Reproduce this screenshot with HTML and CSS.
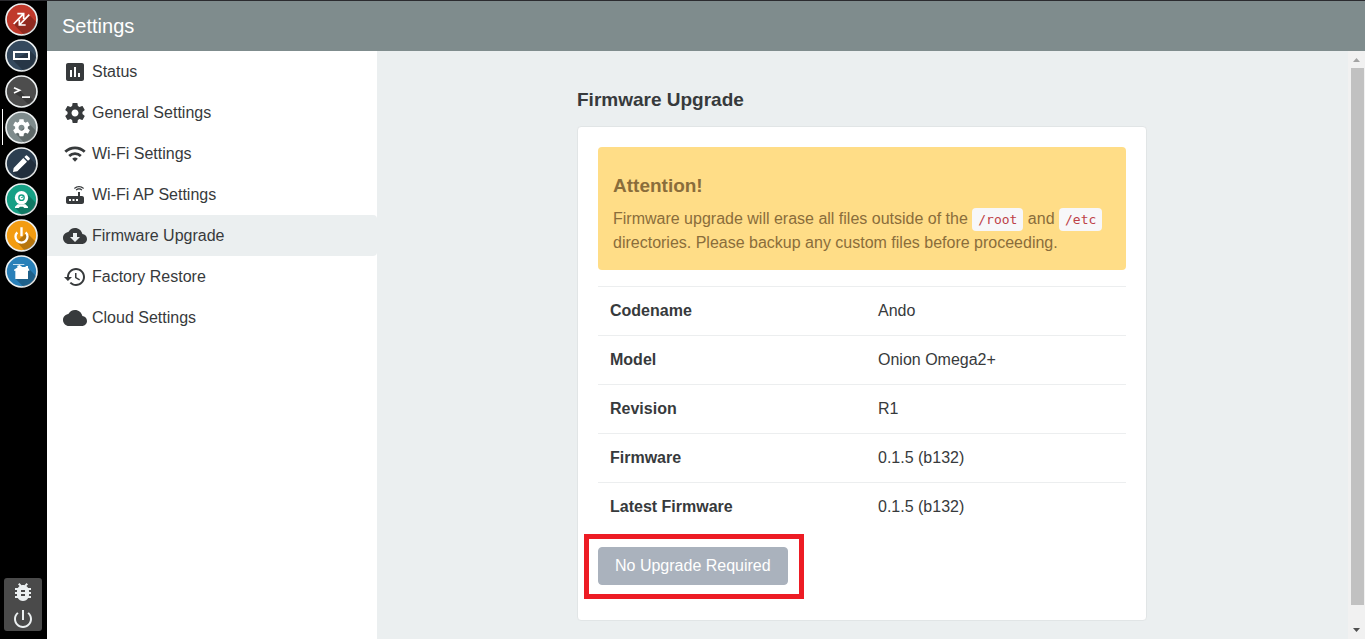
FILE: index.html
```html
<!DOCTYPE html>
<html lang="en">
<head>
<meta charset="utf-8">
<title>Settings</title>
<link rel="stylesheet" href="styles.css">
</head>
<body>
<div class="desktop">
  <nav class="dock" aria-label="Applications">
    <svg class="defs" width="0" height="0" aria-hidden="true">
      <clipPath id="disc"><circle cx="49.5" cy="49.5" r="46"/></clipPath>
    </svg>
    <div class="dock-apps">
      <button class="app" aria-label="Cloud link">
        <svg viewBox="0 0 99 99"><circle class="rim" cx="49.5" cy="49.5" r="46.5" fill="#c0392b"/><path class="shade" clip-path="url(#disc)" d="M72 35L130 93V130H90L26 64L46 50L54 60z"/><path class="line" stroke-width="5" d="M26 63L56 32M37 32H56V48M73 35L43 66M43 50V66H62"/></svg>
      </button>
      <button class="app" aria-label="Expansion display">
        <svg viewBox="0 0 99 99"><circle class="rim" cx="49.5" cy="49.5" r="46.5" fill="#34495e"/><path class="shade" clip-path="url(#disc)" d="M76 36L130 90V130H90L24 64z"/><path class="line" stroke-width="6" d="M27 39H72V60H27z"/></svg>
      </button>
      <button class="app" aria-label="Terminal">
        <svg viewBox="0 0 99 99"><circle class="rim" cx="49.5" cy="49.5" r="46.5" fill="#4d4d4d"/><path class="shade" clip-path="url(#disc)" d="M44 46L62 65H75L110 100H82L51 69L27 54z"/><path class="line" stroke-width="5" d="M27 38L44 46L27 54M51 66.500H75"/></svg>
      </button>
      <button class="app app-active" aria-label="Settings">
        <svg viewBox="0 0 99 99"><circle class="rim" cx="49.5" cy="49.5" r="46.5" fill="#7f8c8d"/><path class="shade" clip-path="url(#disc)" d="M72 38L120 86V130H90L34 70z"/><path fill="#fff" transform="translate(18.900 19.500) scale(2.550)" d="M19.430 12.980c.04-.32.07-.64.07-.98s-.03-.66-.07-.98l2.110-1.650c.19-.15.24-.42.12-.64l-2-3.460c-.12-.22-.39-.3-.61-.22l-2.490 1c-.52-.4-1.080-.73-1.690-.98l-.38-2.650C14.460 2.180 14.250 2 14 2h-4c-.25 0-.46.18-.49.42l-.38 2.650c-.61.25-1.170.59-1.690.98l-2.490-1c-.23-.09-.49 0-.61.22l-2 3.460c-.13.22-.07.49.12.64l2.110 1.650c-.04.32-.07.65-.07.98s.03.66.07.98l-2.110 1.650c-.19.15-.24.42-.12.64l2 3.460c.12.22.39.3.61.22l2.490-1c.52.4 1.080.73 1.690.98l.38 2.650c.03.24.24.42.49.42h4c.25 0 .46-.18.49-.42l.38-2.650c.61-.25 1.170-.59 1.690-.98l2.490 1c.23.09.49 0 .61-.22l2-3.460c.12-.22.07-.49-.12-.64l-2.110-1.650zM12 15.500c-1.930 0-3.500-1.570-3.500-3.500s1.570-3.500 3.500-3.500 3.500 1.570 3.500 3.500-1.570 3.500-3.500 3.500z"/></svg>
      </button>
      <button class="app" aria-label="Editor">
        <svg viewBox="0 0 99 99"><circle class="rim" cx="49.5" cy="49.5" r="46.5" fill="#2c3e50"/><path class="shade" clip-path="url(#disc)" d="M75 34L125 84V130H82L24 74z"/><path fill="#fff" d="M24 75L26 63L55 33L66 44L37 73zM58 30L62 26Q64 24 67 26L74 33Q76 36 73 38L69 41z"/></svg>
      </button>
      <button class="app" aria-label="Webcam">
        <svg viewBox="0 0 99 99"><circle class="rim" cx="49.5" cy="49.5" r="46.5" fill="#16a085"/><path class="shade" clip-path="url(#disc)" d="M64 31L120 87V130H80L31 74z"/><circle cx="49.5" cy="44" r="20" fill="#fff"/><circle cx="49.5" cy="44" r="10" fill="#16a085"/><circle cx="49.5" cy="44" r="6" fill="#fff"/><path d="M47 45L53 39V45z" fill="#16a085"/><path fill="#fff" d="M38 64H61L69 71V75H58L54 71H45L41 75H30V71z"/></svg>
      </button>
      <button class="app" aria-label="Power control">
        <svg viewBox="0 0 99 99"><circle class="rim" cx="49.5" cy="49.5" r="46.5" fill="#f39c12"/><path class="shade" clip-path="url(#disc)" d="M65 41L120 96V130H90L35 68z"/><path class="line" stroke-width="7" d="M37 40A18 18 0 1 0 62 40M49.500 25V52"/></svg>
      </button>
      <button class="app" aria-label="App manager">
        <svg viewBox="0 0 99 99"><circle class="rim" cx="49.5" cy="49.5" r="46.5" fill="#2980b9"/><path class="shade" clip-path="url(#disc)" d="M70 40L125 95V130H90L32 72z"/><path fill="#fff" d="M24 27H58V29.500H24zM36 33L44 30L52 36H62V33H69V38L73 44V47H69V72H31V47H27V44L38 37z"/></svg>
      </button>
    </div>
    <div class="dock-tools">
      <button class="tool" aria-label="Report a bug"><svg viewBox="0 0 24 24"><path d="M20 8h-2.810c-.45-.78-1.070-1.450-1.820-1.960L17 4.410 15.590 3l-2.170 2.170C12.960 5.060 12.490 5 12 5s-.96.06-1.410.17L8.410 3 7 4.410l1.620 1.630C7.880 6.550 7.260 7.220 6.810 8H4v2h2.090c-.05.33-.09.66-.09 1v1H4v2h2v1c0 .34.04.67.09 1H4v2h2.810c1.040 1.790 2.970 3 5.190 3s4.150-1.210 5.190-3H20v-2h-2.090c.05-.33.09-.66.09-1v-1h2v-2h-2v-1c0-.34-.04-.67-.09-1H20V8zm-6 8h-4v-2h4v2zm0-4h-4v-2h4v2z"/></svg></button>
      <button class="tool" aria-label="Log out"><svg viewBox="0 0 24 24"><path d="M13 3h-2v10h2V3zm4.830 2.170l-1.420 1.420C17.990 7.860 19 9.810 19 12c0 3.870-3.130 7-7 7s-7-3.130-7-7c0-2.190 1.010-4.140 2.580-5.420L6.170 5.170C4.230 6.820 3 9.260 3 12c0 4.970 4.030 9 9 9s9-4.030 9-9c0-2.740-1.230-5.180-3.170-6.830z"/></svg></button>
    </div>
  </nav>

  <div class="window">
    <header class="titlebar"><h1 class="title">Settings</h1></header>
    <div class="body">
      <nav class="menu" aria-label="Settings sections">
        <a class="item" href="#status"><svg class="icon" viewBox="0 0 24 24"><path d="M19 3H5c-1.100 0-2 .9-2 2v14c0 1.100.9 2 2 2h14c1.100 0 2-.9 2-2V5c0-1.100-.9-2-2-2zM9 17H7v-7h2v7zm4 0h-2V7h2v10zm4 0h-2v-4h2v4z"/></svg>Status</a>
        <a class="item" href="#general"><svg class="icon" viewBox="0 0 24 24"><path d="M19.430 12.980c.04-.32.07-.64.07-.98s-.03-.66-.07-.98l2.110-1.650c.19-.15.24-.42.12-.64l-2-3.460c-.12-.22-.39-.3-.61-.22l-2.490 1c-.52-.4-1.080-.73-1.690-.98l-.38-2.650C14.460 2.180 14.250 2 14 2h-4c-.25 0-.46.18-.49.42l-.38 2.650c-.61.25-1.170.59-1.690.98l-2.490-1c-.23-.09-.49 0-.61.22l-2 3.460c-.13.22-.07.49.12.64l2.110 1.650c-.04.32-.07.65-.07.98s.03.66.07.98l-2.110 1.650c-.19.15-.24.42-.12.64l2 3.460c.12.22.39.3.61.22l2.490-1c.52.4 1.080.73 1.690.98l.38 2.650c.03.24.24.42.49.42h4c.25 0 .46-.18.49-.42l.38-2.650c.61-.25 1.170-.59 1.690-.98l2.490 1c.23.09.49 0 .61-.22l2-3.460c.12-.22.07-.49-.12-.64l-2.110-1.650zM12 15.500c-1.930 0-3.500-1.570-3.500-3.500s1.570-3.500 3.500-3.500 3.500 1.570 3.500 3.500-1.570 3.500-3.500 3.500z"/></svg>General Settings</a>
        <a class="item" href="#wifi"><svg class="icon" viewBox="0 0 24 24"><g fill="none" stroke="#373a3c" stroke-width="2.800"><path d="M2.300 9.700a14 14 0 0 1 19.400 0"/><path d="M6.200 14a8.500 8.500 0 0 1 11.600 0"/></g><path d="M9.200 16.800a4 4 0 0 1 5.600 0L12 19.800z"/></svg>Wi-Fi Settings</a>
        <a class="item" href="#ap"><svg class="icon" viewBox="0 0 24 24"><path d="M20.200 5.900l.8-.8C19.600 3.700 17.800 3 16 3s-3.600.7-5 2.100l.8.8C13 4.800 14.500 4.200 16 4.200s3 .6 4.200 1.700zm-.9.8c-.9-.9-2.100-1.400-3.300-1.400s-2.400.5-3.300 1.400l.8.8c.7-.7 1.600-1 2.500-1s1.800.3 2.500 1l.8-.8zM19 13h-2V9h-2v4H5c-1.100 0-2 .9-2 2v4c0 1.100.9 2 2 2h14c1.100 0 2-.9 2-2v-4c0-1.100-.9-2-2-2zM8 18H6v-2h2v2zm3.500 0h-2v-2h2v2zm3.500 0h-2v-2h2v2z"/></svg>Wi-Fi AP Settings</a>
        <a class="item item-active" href="#firmware" aria-current="page"><svg class="icon" viewBox="0 0 24 24"><path d="M19.350 10.040C18.670 6.590 15.640 4 12 4 9.110 4 6.600 5.640 5.350 8.040 2.340 8.360 0 10.910 0 14c0 3.310 2.690 6 6 6h13c2.760 0 5-2.240 5-5 0-2.640-2.050-4.780-4.650-4.960zM17 13l-5 5-5-5h3V9h4v4h3z"/></svg>Firmware Upgrade</a>
        <a class="item" href="#restore"><svg class="icon" viewBox="0 0 24 24"><path d="M13 3c-4.970 0-9 4.030-9 9H1l3.890 3.890.07.14L9 12H6c0-3.870 3.130-7 7-7s7 3.130 7 7-3.130 7-7 7c-1.930 0-3.680-.79-4.940-2.060l-1.420 1.420C8.270 19.990 10.510 21 13 21c4.970 0 9-4.030 9-9s-4.030-9-9-9zm-1 5v5l4.280 2.540.72-1.210-3.500-2.080V8H12z"/></svg>Factory Restore</a>
        <a class="item" href="#cloud"><svg class="icon" viewBox="0 0 24 24"><path d="M19.350 10.040C18.670 6.590 15.640 4 12 4 9.110 4 6.600 5.640 5.350 8.040 2.340 8.360 0 10.910 0 14c0 3.310 2.690 6 6 6h13c2.760 0 5-2.240 5-5 0-2.640-2.050-4.780-4.650-4.960z"/></svg>Cloud Settings</a>
      </nav>

      <main class="content">
        <section class="panel">
          <h2 class="heading">Firmware Upgrade</h2>
          <div class="card">
            <div class="alert" role="alert">
              <h3 class="alert-title">Attention!</h3>
              <p class="alert-text">Firmware upgrade will erase all files outside of the <code>/root</code> and <code>/etc</code> directories. Please backup any custom files before proceeding.</p>
            </div>
            <table class="info">
              <tr><th scope="row">Codename</th><td>Ando</td></tr>
              <tr><th scope="row">Model</th><td>Onion Omega2+</td></tr>
              <tr><th scope="row">Revision</th><td>R1</td></tr>
              <tr><th scope="row">Firmware</th><td>0.1.5 (b132)</td></tr>
              <tr><th scope="row">Latest Firmware</th><td>0.1.5 (b132)</td></tr>
            </table>
            <div class="action">
              <button class="upgrade" disabled>No Upgrade Required</button>
            </div>
          </div>
        </section>
      </main>

      <div class="scrollbar" aria-hidden="true">
        <svg class="arrow" viewBox="0 0 17 17"><path fill="#a3a3a3" d="M5 11L8.500 7L12 11z"/></svg>
        <div class="thumb"></div>
        <svg class="arrow" viewBox="0 0 17 17"><path fill="#505050" d="M5 6H12L8.500 10z"/></svg>
      </div>
    </div>
  </div>
</div>
</body>
</html>
```
FILE: styles.css
```css
* {
  box-sizing: border-box;
}

body {
  margin: 0;
  color: #373a3c;
  font: 16px/24px "Liberation Sans", Arial, sans-serif;
}

h1, h2, h3, p {
  margin: 0;
}

button {
  font: inherit;
}

.desktop {
  display: flex;
  height: 100vh;
  overflow: hidden;
  border-top: 1px solid #2b2b2f;
  background: #000;
}

/* Application dock */
.dock {
  display: flex;
  flex-direction: column;
  justify-content: space-between;
  flex: none;
  width: 47px;
  padding-bottom: 8px;
}

.defs {
  position: absolute;
}

.dock-apps {
  display: flex;
  flex-direction: column;
  padding-left: 2px;
}

.app {
  display: block;
  height: 36px;
  padding: 2px 0 1px 2px;
  border: 0;
  border-left: 1px solid transparent;
  background: none;
  text-align: left;
}

.app-active {
  border-left-color: #fff;
}

.app svg {
  display: block;
  width: 33px;
  height: 33px;
}

.rim {
  stroke: #ecf0f1;
  stroke-width: 5;
}

.shade {
  fill: #000;
  opacity: 0.25;
}

.line {
  fill: none;
  stroke: #fff;
}

.dock-tools {
  display: flex;
  flex-direction: column;
  align-items: center;
  gap: 3px;
  width: 38px;
  margin-left: 4px;
  padding-top: 2px;
  border-radius: 3px;
  background: #4a4a4a;
}

.tool {
  display: block;
  padding: 0;
  border: 0;
  background: none;
}

.tool svg {
  display: block;
  width: 24px;
  height: 24px;
  fill: #ecf0f1;
}

/* Settings window */
.window {
  display: flex;
  flex: 1;
  flex-direction: column;
  min-width: 0;
}

.titlebar {
  flex: none;
  padding: 13px 15px;
  background: #7f8c8d;
}

.title {
  color: #fff;
  font-size: 20px;
  font-weight: 400;
  line-height: 24px;
}

.body {
  display: flex;
  flex: 1;
  min-height: 0;
  background: #ebeff0;
}

.menu {
  flex: none;
  width: 330px;
  background: #fff;
}

.item {
  display: flex;
  gap: 5px;
  padding: 9px 16px 8px;
  border-radius: 0 4px 4px 0;
  color: inherit;
  text-decoration: none;
}

.item-active {
  background: #ebeff0;
}

.icon {
  width: 24px;
  height: 24px;
  fill: #373a3c;
}

.content {
  flex: 1;
  min-width: 0;
  overflow: hidden;
  padding: 37px 16px 18px 15px;
}

.panel {
  max-width: 570px;
  margin: 0 auto;
}

.heading {
  margin-bottom: 14px;
  font-size: 19px;
  line-height: 24px;
}

.card {
  padding: 20px;
  border: 1px solid #e1e5e6;
  border-radius: 4px;
  background: #fff;
}

.alert {
  margin-bottom: 16px;
  padding: 27px 15px 15px;
  border-radius: 4px;
  background: #ffdd87;
  color: #8a6d3b;
}

.alert-title {
  margin-bottom: 9px;
  font-size: 19px;
  line-height: 24px;
}

code {
  padding: 4px 6px;
  border-radius: 4px;
  background: #f7f7f9;
  color: #bd4147;
  font: 13px "DejaVu Sans Mono", monospace;
}

.info {
  width: 100%;
  border-collapse: collapse;
  table-layout: fixed;
}

.info th,
.info td {
  padding: 12px;
  border-top: 1px solid #eceeef;
  text-align: left;
}

.info th {
  width: 268px;
}

.action {
  position: relative;
  width: max-content;
  margin: 16px 0 15px;
}

/* Highlight frame around the action */
.action::after {
  position: absolute;
  inset: -13px -16px -14px -14px;
  border: 5px solid #ed1c24;
  content: "";
  pointer-events: none;
}

.upgrade {
  display: block;
  padding: 6px 16px;
  border: 1px solid #aab2bd;
  border-radius: 4px;
  background: #aab2bd;
  color: #fff;
}

/* Scroll bar */
.scrollbar {
  display: flex;
  flex: none;
  flex-direction: column;
  width: 17px;
  background: #f1f1f1;
}

.arrow {
  flex: none;
  width: 17px;
  height: 17px;
}

.thumb {
  flex: 1;
  margin: 0 1px 17px 3px;
  background: #c1c1c1;
}
```
